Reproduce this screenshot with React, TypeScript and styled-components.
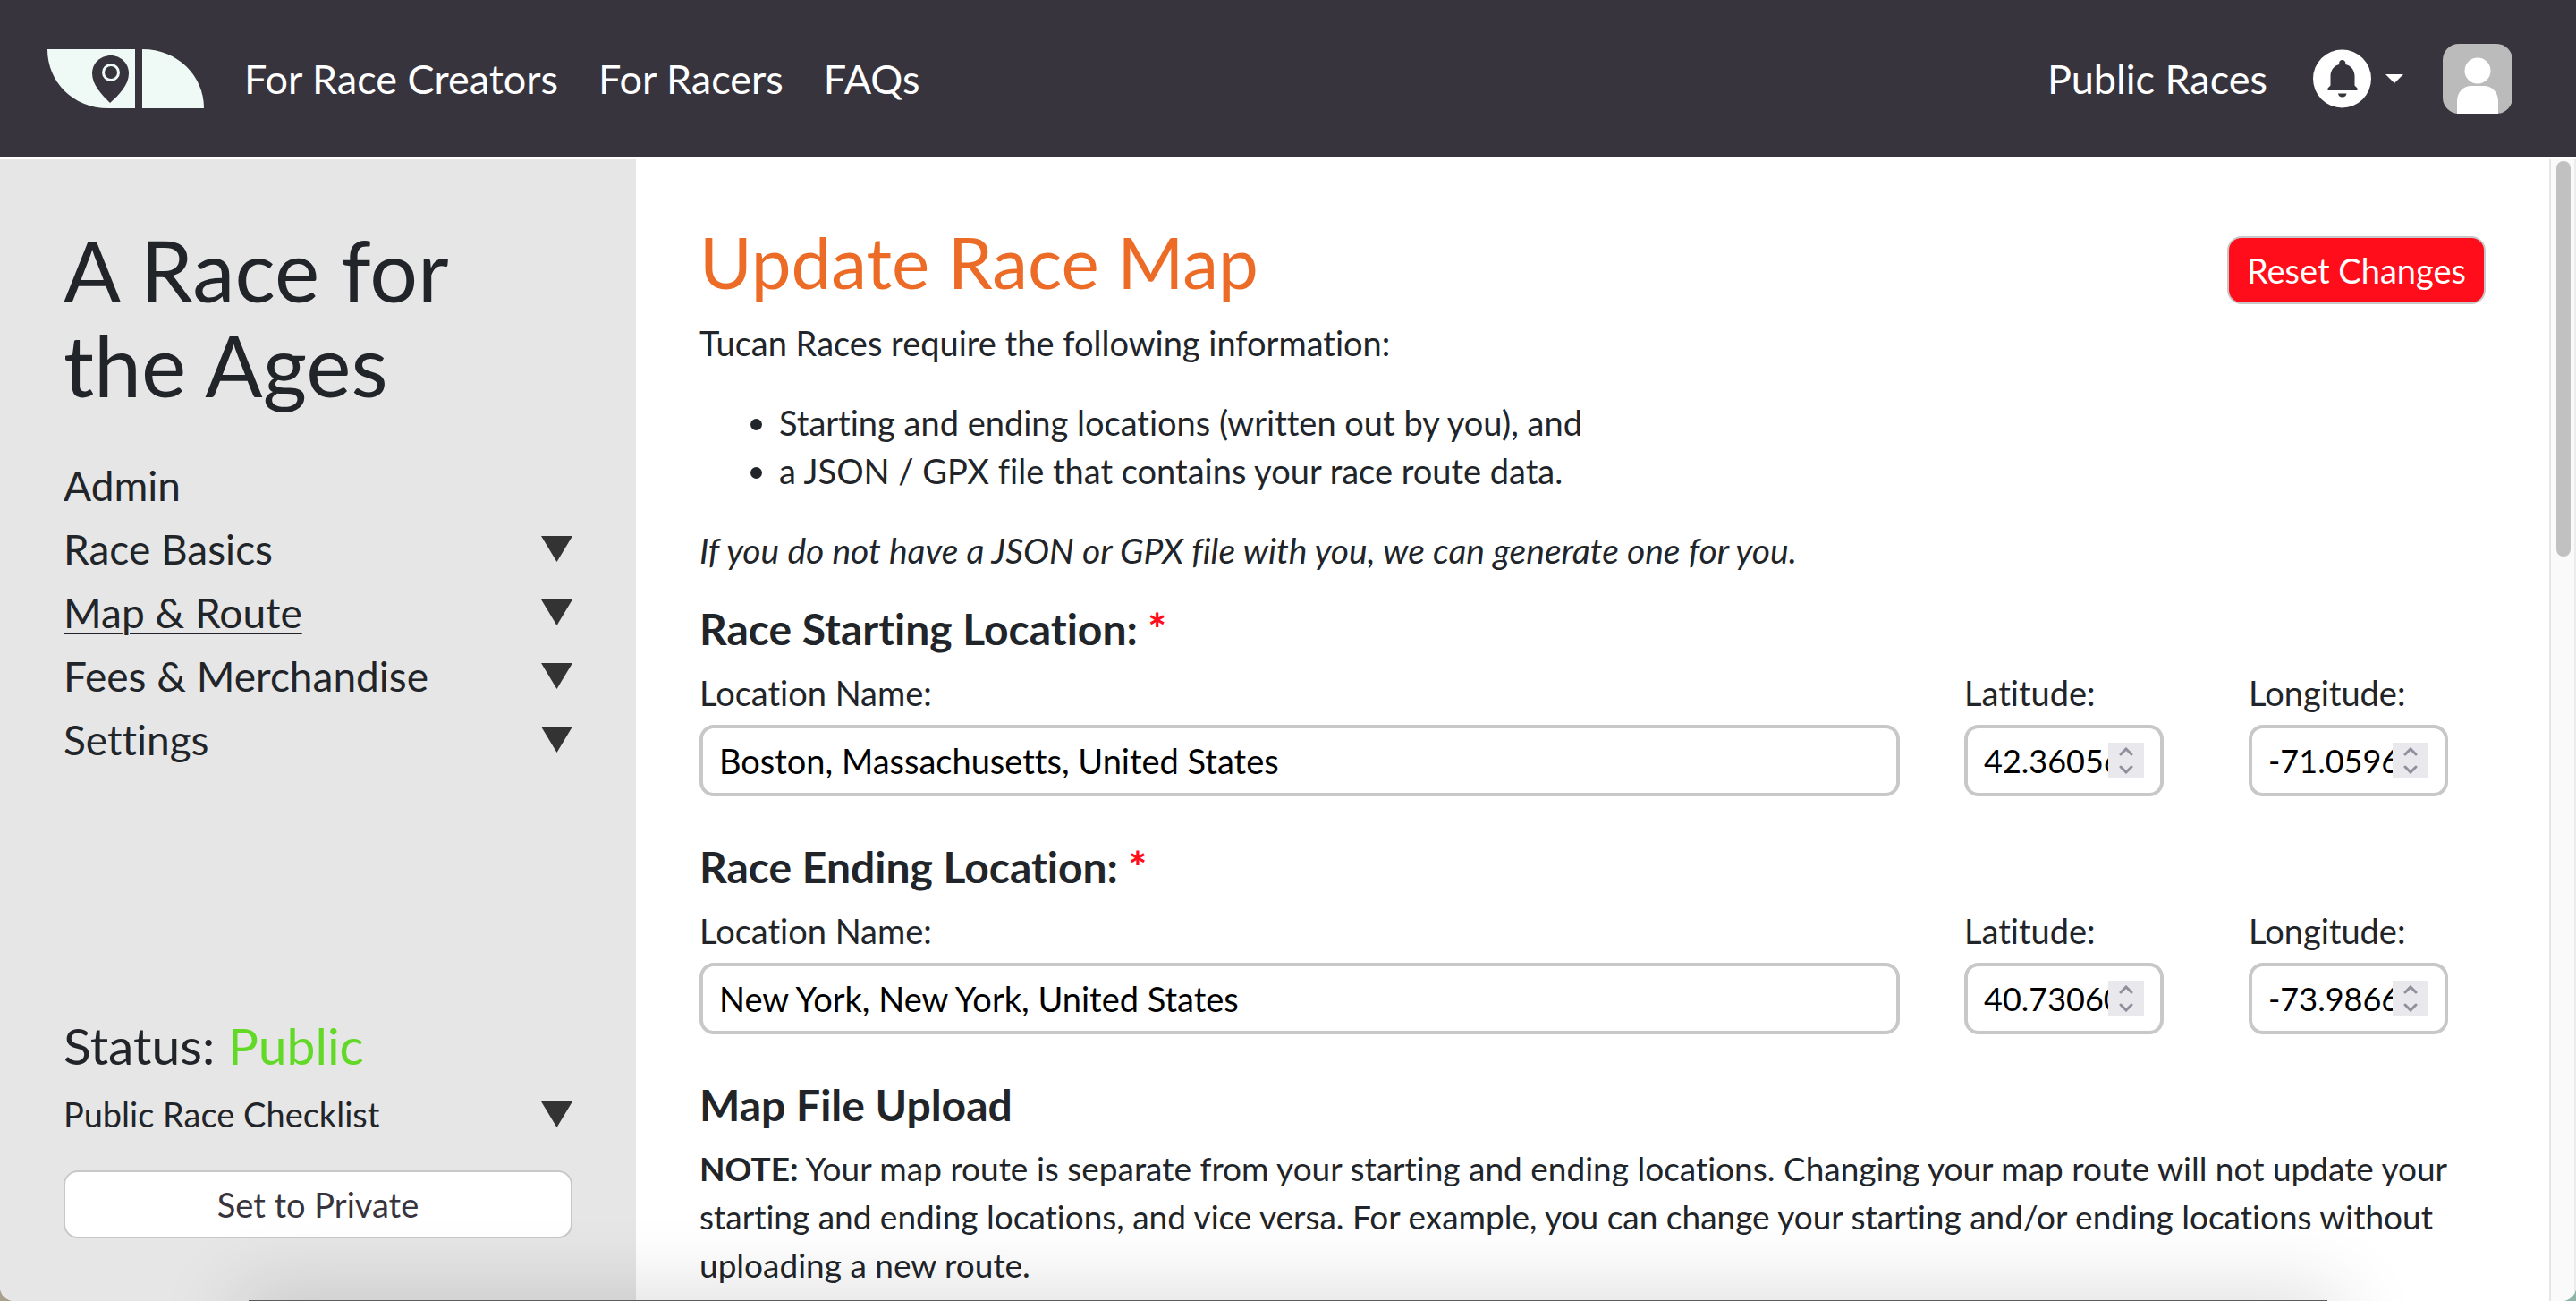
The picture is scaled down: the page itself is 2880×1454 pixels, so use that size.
import React, { useId, useState } from "react";
import styled, { createGlobalStyle } from "styled-components";

const ink = "#212529";
const dark = "#37343e";
const line = "#c8c8c8";

const GlobalStyle = createGlobalStyle`
  *, *::before, *::after { box-sizing: border-box; }
  body {
    margin: 0;
    background: linear-gradient(90deg, #a89f8d 50%, #8fb5ab 50%);
    color: ${ink};
    font: 400 38px/54px Lato, "Open Sans", sans-serif;
    font-variant-ligatures: no-common-ligatures;
  }
  h1, h2, h3, p, ul { margin: 0; }
  button, input { font: inherit; }
  a { color: inherit; text-decoration: none; }
`;

const Page = styled.div`
  position: relative;
  display: flex;
  flex-direction: column;
  height: 100vh;
  overflow: hidden;
  background: #fff;
  border-radius: 0 0 16px 16px;
`;

const TopBar = styled.header`
  display: flex;
  align-items: center;
  justify-content: space-between;
  flex: none;
  height: 176px;
  padding: 0 71px 0 53px;
  background: ${dark};
  color: #fff;
`;

const BarGroup = styled.div<{ $gap: number }>`
  display: flex;
  align-items: center;
  gap: ${(p) => p.$gap}px;
`;

const BarLink = styled.a`
  font-size: 45px;
  line-height: 56px;
`;

const LogoLink = styled.a`
  display: flex;
`;

const PlainButton = styled.button`
  display: flex;
  align-items: center;
  gap: 16px;
  padding: 0;
  border: 0;
  background: none;
  color: inherit;
  cursor: pointer;
`;

const Body = styled.div`
  display: flex;
  flex: 1;
  min-height: 0;
  padding-top: 2px;
`;

const Sidebar = styled.aside`
  display: flex;
  flex-direction: column;
  flex: none;
  width: 711px;
  padding: 70px 71px;
  background: #e6e6e6;
`;

const RaceTitle = styled.h2`
  max-width: 480px;
  font-size: 95px;
  font-weight: 400;
  line-height: 106px;
`;

const SideNav = styled.nav`
  margin-top: 47px;
`;

const SideRow = styled.div<{ $tall?: boolean }>`
  display: flex;
  align-items: center;
  justify-content: space-between;
  font-size: ${(p) => (p.$tall ? 46 : 38)}px;
  line-height: ${(p) => (p.$tall ? 71 : 54)}px;
`;

const SideLink = styled.a<{ $current?: boolean }>`
  text-decoration: ${(p) => (p.$current ? "underline" : "none")};
  text-decoration-thickness: 2px;
  text-underline-offset: 5px;
`;

const StatusBlock = styled.section`
  display: flex;
  flex-direction: column;
  margin-top: auto;
`;

const Status = styled.h3`
  margin-bottom: 18px;
  font-size: 57px;
  font-weight: 400;
  line-height: 64px;

  span { color: #62d926; }
`;

const Button = styled.button<{ $danger?: boolean }>`
  height: 76px;
  padding: 0 20px;
  border: 2px solid ${line};
  border-radius: 16px;
  background: ${(p) => (p.$danger ? "#ff0d1b" : "#fff")};
  color: ${(p) => (p.$danger ? "#fff" : dark)};
  cursor: pointer;
`;

const StatusButton = styled(Button)`
  margin-top: 36px;
`;

const Main = styled.main`
  flex: 1;
  min-width: 0;
  padding: 66px 71px 0;
  overflow: hidden;
`;

const TitleRow = styled.div`
  display: flex;
  align-items: flex-end;
  justify-content: space-between;
  margin-bottom: 16px;
`;

const PageTitle = styled.h1`
  color: #ec6b27;
  font-size: 80px;
  font-weight: 400;
  line-height: 96px;
`;

const Bullets = styled.ul`
  margin: 35px 0;
  padding-left: 89px;
`;

const Aside = styled.p`
  font-size: 39px;
  font-style: italic;
`;

const Note = styled.p`
  font-size: 37px;
`;

const Section = styled.section`
  margin-top: 51px;
`;

const FirstSection = styled(Section)`
  margin-top: 33px;
`;

const SectionTitle = styled.h3`
  margin-bottom: 16px;
  font-size: 48px;
  font-weight: 700;
  line-height: 56px;
`;

const Required = styled.span`
  color: #ff0d1b;
  font-weight: 900;
`;

const Fields = styled.div`
  display: grid;
  grid-template-columns: minmax(0, 1fr) 246px 265px;
  gap: 72px;
`;

const Field = styled.div`
  display: flex;
  flex-direction: column;
  gap: 9px;
`;

const InputBox = styled.div<{ $narrow?: boolean }>`
  display: flex;
  align-items: center;
  width: ${(p) => (p.$narrow ? "223px" : "auto")};
  height: 80px;
  padding: 0 18px;
  border: 4px solid ${line};
  border-radius: 16px;
  background: #fff;
  font-size: ${(p) => (p.$narrow ? 36 : 38)}px;
`;

const Input = styled.input`
  flex: 1;
  min-width: 0;
  width: 100%;
  padding: 0;
  border: 0;
  outline: 0;
  background: none;
  color: #000;
  appearance: textfield;

  &::-webkit-inner-spin-button,
  &::-webkit-outer-spin-button {
    appearance: none;
    margin: 0;
  }
`;

const Stepper = styled.div`
  display: flex;
  flex-direction: column;
  flex: none;
  width: 40px;
  height: 40px;
  background: #e9e9ed;
`;

const StepButton = styled.button`
  display: flex;
  flex: 1;
  align-items: center;
  justify-content: center;
  padding: 0;
  border: 0;
  background: none;
`;

const Rail = styled.div`
  flex: none;
  width: 30px;
  padding: 2px 4px 0 6px;
  border-left: 2px solid #e6e6e6;
  border-right: 2px solid #ececec;
  background: #fafafa;
`;

const Thumb = styled.div`
  height: 442px;
  border-radius: 8px;
  background: #c1c1c1;
`;

/* The edge and glow of the window that sits under this one. */
const UnderGlow = styled.div`
  position: absolute;
  right: 278px;
  bottom: -19px;
  left: 278px;
  height: 20px;
  background: #5c5c5c;
  box-shadow: 0 16px 90px 12px rgba(0, 0, 0, 0.24);
  pointer-events: none;
`;

const Logo = () => (
  <svg width="175" height="66" viewBox="0 0 175 66" aria-label="Tucan" role="img">
    <path fill="#eff9f6" d="M0 0h98v66H68C28 66 0 36 0 0z" />
    <path fill="#eff9f6" d="M106 0c40 0 69 30 69 66h-69z" />
    <path fill={dark} d="M71 7c-12 0-21 9-21 20 0 13 11 24 20 33 10-9 21-20 21-33C91 16 82 7 71 7z" />
    <circle cx="71" cy="26" r="8.5" fill="none" stroke="#eff9f6" strokeWidth="3" />
  </svg>
);

const Bell = () => (
  <svg width="65" height="66" viewBox="0 0 65 66" aria-hidden="true">
    <circle cx="32.5" cy="33" r="32.5" fill="#fff" />
    <path
      fill={dark}
      d="M32.5 12c-2 0-3.300 1.500-3.300 3.500v1.500C23 18.500 19.500 24 19.500 30v10.500l-3 3V46h33v-2.500l-3-3V30c0-6-3.500-11.500-10.200-13v-1.500c0-2-1.500-3.500-3.800-3.500zM28 49.500h9.500a4.800 4.800 0 0 1-9.500 0z"
    />
  </svg>
);

const Caret = () => (
  <svg width="20" height="10" viewBox="0 0 20 10" aria-hidden="true">
    <path fill="#fff" d="M0 0h20L10 10z" />
  </svg>
);

const Avatar = () => (
  <svg width="78" height="78" viewBox="0 0 78 78" aria-hidden="true">
    <rect width="78" height="78" rx="18" fill="#bbb" />
    <circle cx="39" cy="30" r="14.500" fill="#fff" />
    <path fill="#fff" d="M16 78V64c0-10 7-17 16-17h14c9 0 16 7 16 17v14z" />
  </svg>
);

const Triangle = () => (
  <svg width="35" height="29" viewBox="0 0 35 29" aria-hidden="true">
    <path fill="#333" d="M0 0h35L17.500 29z" />
  </svg>
);

const Chevron = ({ up }: { up?: boolean }) => (
  <svg width="16" height="10" viewBox="0 0 16 10" fill="none" stroke="#8f8f9d" strokeWidth="3" strokeLinecap="round" aria-hidden="true">
    <path d={up ? "M2 8l6-6 6 6" : "M2 2l6 6 6-6"} />
  </svg>
);

function NumberField({ label, initial }: { label: string; initial: string }) {
  const id = useId();
  const [value, setValue] = useState(initial);
  const step = (by: number) => setValue((v) => (Number(v) + by).toFixed(5));
  return (
    <Field>
      <label htmlFor={id}>{label}</label>
      <InputBox $narrow>
        <Input id={id} type="number" step="any" value={value} onChange={(e) => setValue(e.target.value)} />
        <Stepper>
          <StepButton type="button" aria-label={`Increase ${label}`} onClick={() => step(1)}>
            <Chevron up />
          </StepButton>
          <StepButton type="button" aria-label={`Decrease ${label}`} onClick={() => step(-1)}>
            <Chevron />
          </StepButton>
        </Stepper>
      </InputBox>
    </Field>
  );
}

function LocationFields({ name, lat, lng }: { name: string; lat: string; lng: string }) {
  const id = useId();
  return (
    <Fields>
      <Field>
        <label htmlFor={id}>Location Name:</label>
        <InputBox>
          <Input id={id} type="text" defaultValue={name} />
        </InputBox>
      </Field>
      <NumberField label="Latitude:" initial={lat} />
      <NumberField label="Longitude:" initial={lng} />
    </Fields>
  );
}

const sideItems = [
  { label: "Admin", opens: false },
  { label: "Race Basics", opens: true },
  { label: "Map & Route", opens: true, current: true },
  { label: "Fees & Merchandise", opens: true },
  { label: "Settings", opens: true },
];

export default function App() {
  return (
    <>
      <GlobalStyle />
      <Page>
        <TopBar>
          <BarGroup $gap={45}>
            <LogoLink href="#home"><Logo /></LogoLink>
            <BarLink href="#creators">For Race Creators</BarLink>
            <BarLink href="#racers">For Racers</BarLink>
            <BarLink href="#faqs">FAQs</BarLink>
          </BarGroup>
          <BarGroup $gap={51}>
            <BarLink href="#races">Public Races</BarLink>
            <BarGroup $gap={44}>
              <PlainButton type="button" aria-label="Notifications">
                <Bell />
                <Caret />
              </PlainButton>
              <PlainButton type="button" aria-label="Account">
                <Avatar />
              </PlainButton>
            </BarGroup>
          </BarGroup>
        </TopBar>
        <Body>
          <Sidebar>
            <RaceTitle>A Race for the Ages</RaceTitle>
            <SideNav>
              {sideItems.map((item) => (
                <SideRow key={item.label} $tall>
                  <SideLink href="#section" $current={item.current}>{item.label}</SideLink>
                  {item.opens && (
                    <PlainButton type="button" aria-label={`Open ${item.label}`}>
                      <Triangle />
                    </PlainButton>
                  )}
                </SideRow>
              ))}
            </SideNav>
            <StatusBlock>
              <Status>Status: <span>Public</span></Status>
              <SideRow>
                Public Race Checklist
                <PlainButton type="button" aria-label="Open checklist">
                  <Triangle />
                </PlainButton>
              </SideRow>
              <StatusButton type="button">Set to Private</StatusButton>
            </StatusBlock>
          </Sidebar>
          <Main>
            <TitleRow>
              <PageTitle>Update Race Map</PageTitle>
              <Button type="button" $danger>Reset Changes</Button>
            </TitleRow>
            <p>Tucan Races require the following information:</p>
            <Bullets>
              <li>Starting and ending locations (written out by you), and</li>
              <li>a JSON / GPX file that contains your race route data.</li>
            </Bullets>
            <Aside>If you do not have a JSON or GPX file with you, we can generate one for you.</Aside>
            <FirstSection>
              <SectionTitle>Race Starting Location: <Required>*</Required></SectionTitle>
              <LocationFields name="Boston, Massachusetts, United States" lat="42.36056" lng="-71.05961" />
            </FirstSection>
            <Section>
              <SectionTitle>Race Ending Location: <Required>*</Required></SectionTitle>
              <LocationFields name="New York, New York, United States" lat="40.73060" lng="-73.98661" />
            </Section>
            <Section>
              <SectionTitle>Map File Upload</SectionTitle>
              <Note>
                <strong>NOTE:</strong> Your map route is separate from your starting and ending locations. Changing your map
                route will not update your starting and ending locations, and vice versa. For example, you can change your
                starting and/or ending locations without uploading a new route.
              </Note>
            </Section>
          </Main>
          <Rail><Thumb /></Rail>
        </Body>
        <UnderGlow />
      </Page>
    </>
  );
}
